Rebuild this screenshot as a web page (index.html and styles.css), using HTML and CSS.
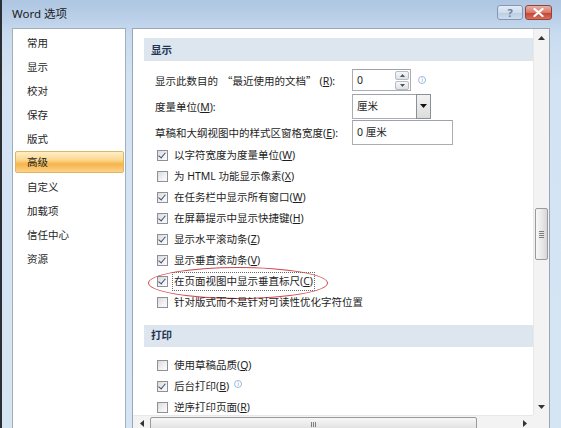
FILE: index.html
```html
<!DOCTYPE html>
<html lang="zh-CN">
<head>
<meta charset="utf-8">
<title>Word 选项</title>
<link rel="stylesheet" href="styles.css">
</head>
<body>
<div class="window">
  <div class="titlebar">
    <span class="title">Word 选项</span>
    <div class="tbtns">
      <span class="tbtn help">?</span>
      <span class="tbtn close"><svg width="11" height="9" viewBox="0 0 11 9"><path d="M1.5 1 L9.5 8 M9.5 1 L1.5 8" stroke="#fff" stroke-width="2.2" stroke-linecap="round"/></svg></span>
    </div>
  </div>
  <div class="main">
    <ul class="nav">
      <li>常用</li>
      <li>显示</li>
      <li>校对</li>
      <li>保存</li>
      <li>版式</li>
      <li class="active">高级</li>
      <li>自定义</li>
      <li>加载项</li>
      <li>信任中心</li>
      <li>资源</li>
    </ul>
    <div class="panel">
      <div class="scroll">
        <div class="section">显示</div>
        <div class="form-row">
          <span class="label">显示此数目的<span class="q ql">“</span>最近使用的文档<span class="q qr">”</span>(<u>R</u>):</span>
          <div class="spin">
            <span class="val">0</span>
            <span class="spinbtns">
              <span class="sb"><svg width="5" height="3" viewBox="0 0 5 3"><path d="M0 3 L2.5 0 L5 3Z" fill="#555"/></svg></span>
              <span class="sb"><svg width="5" height="3" viewBox="0 0 5 3"><path d="M0 0 L2.5 3 L5 0Z" fill="#555"/></svg></span>
            </span>
          </div>
          <span class="info">i</span>
        </div>
        <div class="form-row">
          <span class="label">度量单位(<u>M</u>):</span>
          <div class="combo">
            <span class="val">厘米</span>
            <span class="dd"><svg width="7" height="4" viewBox="0 0 7 4"><path d="M0 0 L7 0 L3.5 4Z" fill="#111"/></svg></span>
          </div>
        </div>
        <div class="form-row">
          <span class="label">草稿和大纲视图中的样式区窗格宽度(<u>E</u>):</span>
          <div class="text-input"><span class="val">0 厘米</span></div>
        </div>
        <div class="check-row"><span class="cb on"></span><span class="ctext">以字符宽度为度量单位(<u>W</u>)</span></div>
        <div class="check-row"><span class="cb"></span><span class="ctext">为 HTML 功能显示像素(<u>X</u>)</span></div>
        <div class="check-row"><span class="cb on"></span><span class="ctext">在任务栏中显示所有窗口(<u>W</u>)</span></div>
        <div class="check-row"><span class="cb on"></span><span class="ctext">在屏幕提示中显示快捷键(<u>H</u>)</span></div>
        <div class="check-row"><span class="cb on"></span><span class="ctext">显示水平滚动条(<u>Z</u>)</span></div>
        <div class="check-row"><span class="cb on"></span><span class="ctext">显示垂直滚动条(<u>V</u>)</span></div>
        <div class="check-row marked"><span class="cb on"></span><span class="ctext focus">在页面视图中显示垂直标尺(<u>C</u>)</span><span class="ellipse"></span></div>
        <div class="check-row"><span class="cb"></span><span class="ctext">针对版式而不是针对可读性优化字符位置</span></div>
        <div class="section print">打印</div>
        <div class="check-row first"><span class="cb"></span><span class="ctext">使用草稿品质(<u>Q</u>)</span></div>
        <div class="check-row"><span class="cb on"></span><span class="ctext">后台打印(<u>B</u>)</span><span class="info small">i</span></div>
        <div class="check-row"><span class="cb"></span><span class="ctext">逆序打印页面(<u>R</u>)</span></div>
      </div>
      <div class="vscroll">
        <span class="arrow"><svg width="7" height="4" viewBox="0 0 7 4"><path d="M0 4 L3.5 0 L7 4Z" fill="#333"/></svg></span>
        <div class="vtrack"><span class="vthumb"><i></i><i></i><i></i><i></i></span></div>
        <span class="arrow"><svg width="7" height="4" viewBox="0 0 7 4"><path d="M0 0 L7 0 L3.5 4Z" fill="#333"/></svg></span>
      </div>
      <div class="hscroll">
        <span class="harrow"><svg width="4" height="7" viewBox="0 0 4 7"><path d="M4 0 L0 3.5 L4 7Z" fill="#333"/></svg></span>
        <div class="htrack"><span class="hthumb"><i></i><i></i><i></i></span></div>
        <span class="harrow"><svg width="4" height="7" viewBox="0 0 4 7"><path d="M0 0 L4 3.5 L0 7Z" fill="#333"/></svg></span>
      </div>
      <div class="corner"></div>
    </div>
  </div>
</div>
</body>
</html>
```

FILE: styles.css
```css
html, body {
  margin: 0;
  padding: 0;
  width: 561px;
  height: 428px;
  overflow: hidden;
}
body {
  font-family: "Noto Sans", "Noto Sans CJK SC", sans-serif;
  font-size: 10.5px;
  color: #1e1e1e;
}
.q { font-family: "Noto Sans CJK SC", sans-serif; }
.ql { margin-left: 4px; }
.qr { margin-right: 3px; }
.window {
  width: 561px;
  height: 445px;
  box-sizing: border-box;
  border-left: 2px solid #2b2e33;
  background: linear-gradient(to bottom, #aec6e2 0px, #bcd1e9 20px, #c9dbef 34px, #d3e3f3 80px, #d6e5f4 100%);
  display: flex;
  flex-direction: column;
}
.titlebar {
  height: 28px;
  flex: none;
  display: flex;
  align-items: flex-start;
  justify-content: space-between;
  padding: 0 9px 0 10px;
}
.title {
  font-size: 11.5px;
  line-height: 28px;
  color: #1b1b1b;
}
.tbtns {
  display: flex;
  gap: 2px;
  margin-top: 5px;
}
.tbtn {
  height: 15px;
  box-sizing: border-box;
  border-radius: 3px;
  display: flex;
  align-items: center;
  justify-content: center;
}
.help {
  width: 26px;
  border: 1px solid #8498b4;
  background: linear-gradient(to bottom, #e3ecf6 0%, #cfdcec 50%, #bccde2 51%, #cfdcec 100%);
  color: #6a819e;
  font-size: 11px;
  font-weight: bold;
  line-height: 13px;
}
.close {
  width: 27px;
  border: 1px solid #93443a;
  background: linear-gradient(to bottom, #eab0a6 0%, #d9796b 50%, #c5412f 51%, #d5705c 100%);
}
.main {
  flex: 1;
  display: flex;
  gap: 6px;
  padding: 0 11px 0 10px;
  min-height: 0;
}
.nav {
  list-style: none;
  margin: 0;
  padding: 2px 1px 0 2px;
  width: 114px;
  box-sizing: border-box;
  background: #fff;
  border: 1px solid #a5adb8;
}
.nav li {
  height: 24px;
  line-height: 24px;
  padding-left: 12px;
  font-size: 10.5px;
  box-sizing: border-box;
}
.nav li.active {
  height: 22px;
  line-height: 21px;
  margin: 0 0 2px 0;
  border: 1px solid #e2b466;
  border-radius: 2px;
  padding-left: 11px;
  background: linear-gradient(to bottom, #fdeec9 0%, #fbd88e 40%, #f6b44c 60%, #fbd38a 100%);
}
.panel {
  flex: 1;
  border: 1px solid #9aa6b5;
  background: #fff;
  display: grid;
  grid-template-columns: 1fr 16px;
  grid-template-rows: 386px 17px;
  align-self: stretch;
}
.scroll {
  padding: 9px 0 0 11px;
  overflow: hidden;
}
.section {
  height: 23px;
  line-height: 23px;
  padding-left: 7px;
  background: #dde6ef;
  font-weight: bold;
  color: #1f3553;
  font-family: "Noto Sans CJK SC", sans-serif;
  margin-bottom: 6px;
}
.section.print {
  height: 22px;
  line-height: 20px;
  margin-top: 12px;
  margin-bottom: 8px;
}
.form-row {
  height: 26px;
  display: flex;
  align-items: center;
  padding-left: 11px;
}
.label {
  width: 197px;
  flex: none;
  white-space: nowrap;
}
.val { padding-left: 4px; line-height: 20px; }
.spin, .combo, .text-input {
  box-sizing: border-box;
  border: 1px solid #abadb3;
  border-top-color: #9ea2aa;
  background: #fff;
  display: flex;
  align-items: center;
  justify-content: space-between;
}
.spin { width: 59px; height: 22px; }
.spinbtns {
  display: flex;
  flex-direction: column;
  gap: 1px;
  margin-right: 1px;
}
.sb {
  width: 14px;
  height: 9px;
  box-sizing: border-box;
  border: 1px solid #b7bcc4;
  border-radius: 2px;
  background: linear-gradient(to bottom, #f6f7f9, #dde1e7);
  display: flex;
  align-items: center;
  justify-content: center;
}
.info {
  margin-left: 7px;
  width: 8px;
  height: 8px;
  box-sizing: border-box;
  border: 1px solid #9dbbdc;
  border-radius: 50%;
  color: #7ea4cf;
  font-size: 6px;
  line-height: 6px;
  text-align: center;
  font-family: "DejaVu Sans", sans-serif;
}
.info.small { margin-left: 3px; margin-top: -6px; }
.combo { width: 79px; height: 25px; }
.dd {
  width: 15px;
  height: 25px;
  margin: -1px -1px -1px 0;
  box-sizing: border-box;
  border: 1px solid #8b8f96;
  background: linear-gradient(to bottom, #f3f3f3, #dcdcdc);
  display: flex;
  align-items: center;
  justify-content: center;
}
.text-input { width: 101px; height: 25px; }
.check-row {
  height: 21px;
  display: flex;
  align-items: center;
  padding-left: 13px;
  position: relative;
}
.cb {
  width: 11px;
  height: 11px;
  flex: none;
  box-sizing: border-box;
  border: 1px solid #8e9096;
  background: linear-gradient(135deg, #d9dadc 0%, #f2f2f3 60%, #fbfbfb 100%);
  margin-right: 4px;
  position: relative;
}
.cb.on::after {
  content: "";
  position: absolute;
  left: 2px;
  top: 0px;
  width: 3px;
  height: 6px;
  border-right: 1.6px solid #3b4f74;
  border-bottom: 1.6px solid #3b4f74;
  transform: rotate(40deg);
}
.ctext {
  white-space: nowrap;
  line-height: 17px;
  border: 1px solid transparent;
  padding: 0 1px;
}
.ctext.focus { border: 1px dotted #6a6a6a; }
.ellipse {
  position: absolute;
  left: 4px;
  top: -4px;
  width: 180px;
  height: 32px;
  box-sizing: border-box;
  border: 1.5px solid #cf4a4d;
  border-radius: 50%;
  pointer-events: none;
}
.vscroll {
  grid-column: 2;
  grid-row: 1;
  background: #f3f3f3;
  border-left: 1px solid #e8e8e8;
  display: flex;
  flex-direction: column;
  align-items: center;
}
.arrow {
  height: 17px;
  display: flex;
  align-items: center;
  justify-content: center;
  flex: none;
}
.vtrack {
  flex: 1;
  width: 100%;
  position: relative;
}
.vthumb {
  position: absolute;
  left: 1px;
  right: 1px;
  top: 162px;
  height: 52px;
  box-sizing: border-box;
  border: 1px solid #9a9a9a;
  border-radius: 2px;
  background: linear-gradient(to right, #f7f7f7, #e6e6e6 60%, #d6d6d6);
  display: flex;
  flex-direction: column;
  align-items: center;
  justify-content: center;
  gap: 1px;
}
.vthumb i {
  display: block;
  width: 5px;
  height: 1px;
  background: #7d7d7d;
}
.hscroll {
  grid-column: 1;
  grid-row: 2;
  background: #f3f3f3;
  border-top: 1px solid #e8e8e8;
  display: flex;
  align-items: flex-start;
}
.harrow {
  width: 17px;
  height: 14px;
  display: flex;
  align-items: center;
  justify-content: center;
  flex: none;
}
.htrack {
  flex: 1;
  height: 14px;
  position: relative;
}
.hthumb {
  position: absolute;
  left: 0px;
  width: 327px;
  top: 1px;
  height: 16px;
  box-sizing: border-box;
  border: 1px solid #9a9a9a;
  border-radius: 2px;
  background: linear-gradient(to bottom, #f7f7f7, #e6e6e6 60%, #d6d6d6);
  display: flex;
  justify-content: center;
  align-items: flex-start;
  gap: 1px;
  padding-top: 4px;
}
.hthumb i {
  display: block;
  width: 1px;
  height: 5px;
  background: #7d7d7d;
}
.corner {
  grid-column: 2;
  grid-row: 2;
  background: #f3f3f3;
}
```
